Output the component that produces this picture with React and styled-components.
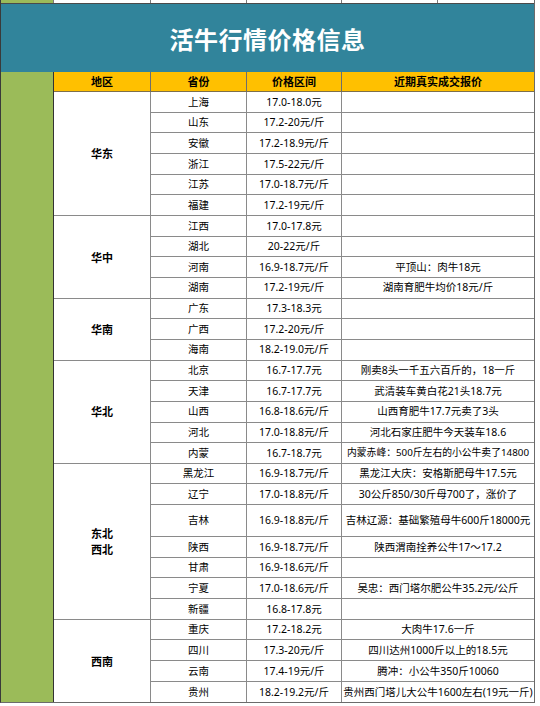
import React from 'react';
import styled, { createGlobalStyle } from 'styled-components';

const GlobalStyle = createGlobalStyle`
  html, body {
    margin: 0;
    padding: 0;
    background: #ffffff;
  }
  body {
    font-family: "Noto Sans", "Noto Sans CJK SC", sans-serif;
    color: #000;
  }
`;

const COLS = '53px 97px 96px 95px 192px';
const ROW_H = 20.67;

const regions = [
  {
    name: '华东',
    rows: [
      ['上海', '17.0-18.0元', ''],
      ['山东', '17.2-20元/斤', ''],
      ['安徽', '17.2-18.9元/斤', ''],
      ['浙江', '17.5-22元/斤', ''],
      ['江苏', '17.0-18.7元/斤', ''],
      ['福建', '17.2-19元/斤', ''],
    ],
  },
  {
    name: '华中',
    rows: [
      ['江西', '17.0-17.8元', ''],
      ['湖北', '20-22元/斤', ''],
      ['河南', '16.9-18.7元/斤', '平顶山：肉牛18元'],
      ['湖南', '17.2-19元/斤', '湖南育肥牛均价18元/斤'],
    ],
  },
  {
    name: '华南',
    rows: [
      ['广东', '17.3-18.3元', ''],
      ['广西', '17.2-20元/斤', ''],
      ['海南', '18.2-19.0元/斤', ''],
    ],
  },
  {
    name: '华北',
    rows: [
      ['北京', '16.7-17.7元', '刚卖8头一千五六百斤的，18一斤'],
      ['天津', '16.7-17.7元', '武清装车黄白花21头18.7元'],
      ['山西', '16.8-18.6元/斤', '山西育肥牛17.7元卖了3头'],
      ['河北', '17.0-18.8元/斤', '河北石家庄肥牛今天装车18.6'],
      ['内蒙', '16.7-18.7元', '内蒙赤峰：500斤左右的小公牛卖了14800', { small: true }],
    ],
  },
  {
    name: '东北\n西北',
    rows: [
      ['黑龙江', '16.9-18.7元/斤', '黑龙江大庆：安格斯肥母牛17.5元'],
      ['辽宁', '17.0-18.8元/斤', '30公斤850/30斤母700了，涨价了'],
      ['吉林', '16.9-18.8元/斤', '吉林辽源：基础繁殖母牛600斤18000元', { tall: true }],
      ['陕西', '16.9-18.7元/斤', '陕西渭南拴养公牛17～17.2'],
      ['甘肃', '16.9-18.6元/斤', ''],
      ['宁夏', '17.0-18.6元/斤', '吴忠：西门塔尔肥公牛35.2元/公斤'],
      ['新疆', '16.8-17.8元', ''],
    ],
  },
  {
    name: '西南',
    rows: [
      ['重庆', '17.2-18.2元', '大肉牛17.6一斤'],
      ['四川', '17.3-20元/斤', '四川达州1000斤以上的18.5元'],
      ['云南', '17.4-19元/斤', '腾冲：小公牛350斤10060'],
      ['贵州', '18.2-19.2元/斤', '贵州西门塔儿大公牛1600左右(19元一斤)'],
    ],
  },
];

const Page = styled.div`
  width: 540px;
  height: 706px;
  overflow: hidden;
  background: #ffffff;
`;

const Sheet = styled.div`
  width: 535px;
  box-sizing: border-box;
  border-left: 1px solid #3a3a3a;
  border-right: 1px solid #6b6b6b;
  border-bottom: 1px solid #6b6b6b;
`;

const TopStrip = styled.div`
  display: grid;
  grid-template-columns: 53px 97px 96px 95px 96px 96px;
  height: 3px;
`;

const StripCell = styled.div`
  background: ${p => (p.$green ? '#9bbb59' : '#ffffff')};
  border-right: ${p => (p.$last ? 'none' : '1px solid #7a7a7a')};
`;

const Banner = styled.div`
  height: 69px;
  box-sizing: border-box;
  border-top: 1px solid #4a4a4a;
  background: #31849b;
  display: flex;
  align-items: center;
  justify-content: center;
`;

const Title = styled.h1`
  margin: 0;
  color: #ffffff;
  font-family: "Noto Sans CJK SC", sans-serif;
  font-size: 24px;
  font-weight: 700;
  letter-spacing: 0.5px;
`;

const Grid = styled.div`
  display: grid;
  grid-template-columns: ${COLS};
  grid-template-rows: ${p => p.$rows};
`;

const Green = styled.div`
  grid-column: 1;
  grid-row: 1 / -1;
  background: #9bbb59;
  border-right: 1px solid #333333;
`;

const Cell = styled.div`
  grid-column: ${p => p.$col};
  grid-row: ${p => p.$row} / span ${p => p.$span || 1};
  display: flex;
  align-items: center;
  justify-content: center;
  box-sizing: border-box;
  border-right: ${p => (p.$col === 5 ? 'none' : '1px solid #8a8a8a')};
  border-bottom: ${p => (p.$lastRow ? 'none' : '1px solid #8a8a8a')};
  font-size: ${p => (p.$small ? '9.8px' : '10.5px')};
  line-height: 1;
  white-space: nowrap;
  overflow: visible;
  background: #ffffff;
`;

const HeadCell = styled(Cell)`
  background: #ffc000;
  font-family: "Noto Sans CJK SC", sans-serif;
  font-weight: 700;
  font-size: 11px;
  border-right: ${p => (p.$col === 5 ? 'none' : '1px solid #6e6e6e')};
  border-bottom: 1px solid #7d6f4a;
`;

const RegionCell = styled(Cell)`
  font-family: "Noto Sans CJK SC", sans-serif;
  font-weight: 700;
  font-size: 11px;
  line-height: 1.5;
  white-space: pre-line;
  text-align: center;
`;

export default function App() {
  const heights = ['20px'];
  const cells = [];
  let row = 2;
  const total = regions.reduce((n, r) => n + r.rows.length, 0);
  let count = 0;

  regions.forEach(region => {
    const start = row;
    region.rows.forEach(([prov, price, quote, opts = {}]) => {
      count += 1;
      const last = count === total;
      heights.push(opts.tall ? '32px' : `${ROW_H}px`);
      cells.push(
        <Cell key={`${prov}-p`} $col={3} $row={row} $lastRow={last}>
          {prov}
        </Cell>,
        <Cell key={`${prov}-v`} $col={4} $row={row} $lastRow={last}>
          {price}
        </Cell>,
        <Cell key={`${prov}-q`} $col={5} $row={row} $lastRow={last} $small={opts.small}>
          {quote}
        </Cell>
      );
      row += 1;
    });
    cells.push(
      <RegionCell
        key={region.name}
        $col={2}
        $row={start}
        $span={region.rows.length}
        $lastRow={row - 1 === total + 1}
      >
        {region.name}
      </RegionCell>
    );
  });

  return (
    <Page>
      <GlobalStyle />
      <Sheet>
        <TopStrip>
          <StripCell $green />
          <StripCell />
          <StripCell />
          <StripCell />
          <StripCell />
          <StripCell $last />
        </TopStrip>
        <Banner>
          <Title>活牛行情价格信息</Title>
        </Banner>
        <Grid $rows={heights.join(' ')}>
          <Green />
          <HeadCell $col={2} $row={1}>地区</HeadCell>
          <HeadCell $col={3} $row={1}>省份</HeadCell>
          <HeadCell $col={4} $row={1}>价格区间</HeadCell>
          <HeadCell $col={5} $row={1}>近期真实成交报价</HeadCell>
          {cells}
        </Grid>
      </Sheet>
    </Page>
  );
}
